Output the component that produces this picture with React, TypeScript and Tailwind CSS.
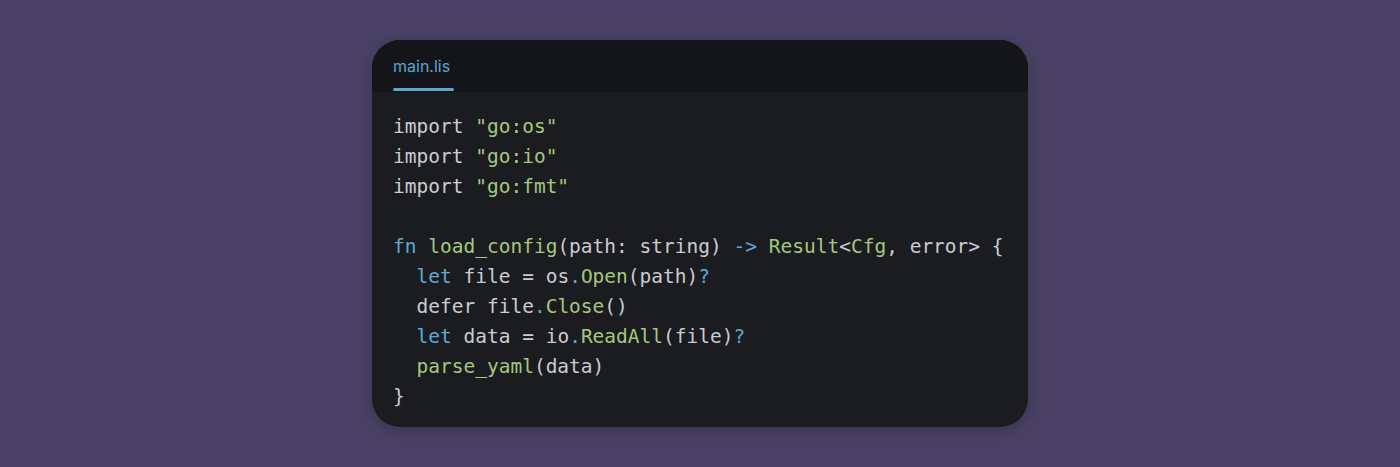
import React from "react";

const G = "text-[#a5c77e]";
const B = "text-[#5ea9d6]";
const T = "text-[#c9ccd1]";

type Seg = [string, string];

const lines: Seg[][] = [
  [[T, "import "], [G, '"go:os"']],
  [[T, "import "], [G, '"go:io"']],
  [[T, "import "], [G, '"go:fmt"']],
  [],
  [
    [B, "fn "],
    [G, "load_config"],
    [T, "(path: string) "],
    [B, "->"],
    [T, " "],
    [G, "Result"],
    [T, "<"],
    [G, "Cfg"],
    [T, ", error> {"],
  ],
  [[T, "  "], [B, "let"], [T, " file = os"], [B, "."], [G, "Open"], [T, "(path)"], [B, "?"]],
  [[T, "  defer file"], [B, "."], [G, "Close"], [T, "()"]],
  [[T, "  "], [B, "let"], [T, " data = io"], [B, "."], [G, "ReadAll"], [T, "(file)"], [B, "?"]],
  [[T, "  "], [G, "parse_yaml"], [T, "(data)"]],
  [[T, "}"]],
];

export default function App() {
  return (
    <div className="w-[1400px] h-[467px] bg-[#4a4266] flex items-center justify-center">
      <div className="w-[656px] h-[387px] rounded-[28px] overflow-hidden bg-[#1b1c20] flex flex-col shadow-[0_4px_16px_rgba(0,0,0,0.25)]">
        <div className="h-[52px] bg-[#141519] px-[21px] flex">
          <div className="flex flex-col justify-between pt-[15px]">
            <span
              className="text-[16px] leading-[22px] text-[#5aa7cf]"
              style={{ fontFamily: "Inter, 'Noto Sans', sans-serif" }}
            >
              main.lis
            </span>
            <div className="h-[3px] w-[61px] rounded-full bg-[#5aa7cf] mb-[1px]" />
          </div>
        </div>
        <div
          className="px-[21px] pt-[20px] text-[19.5px] leading-[30px] whitespace-pre"
          style={{ fontFamily: "'DejaVu Sans Mono', monospace" }}
        >
          {lines.map((l, i) => (
            <div key={i} className="h-[30px]">
              {l.map(([c, t], j) => (
                <span key={j} className={c}>
                  {t}
                </span>
              ))}
            </div>
          ))}
        </div>
      </div>
    </div>
  );
}
